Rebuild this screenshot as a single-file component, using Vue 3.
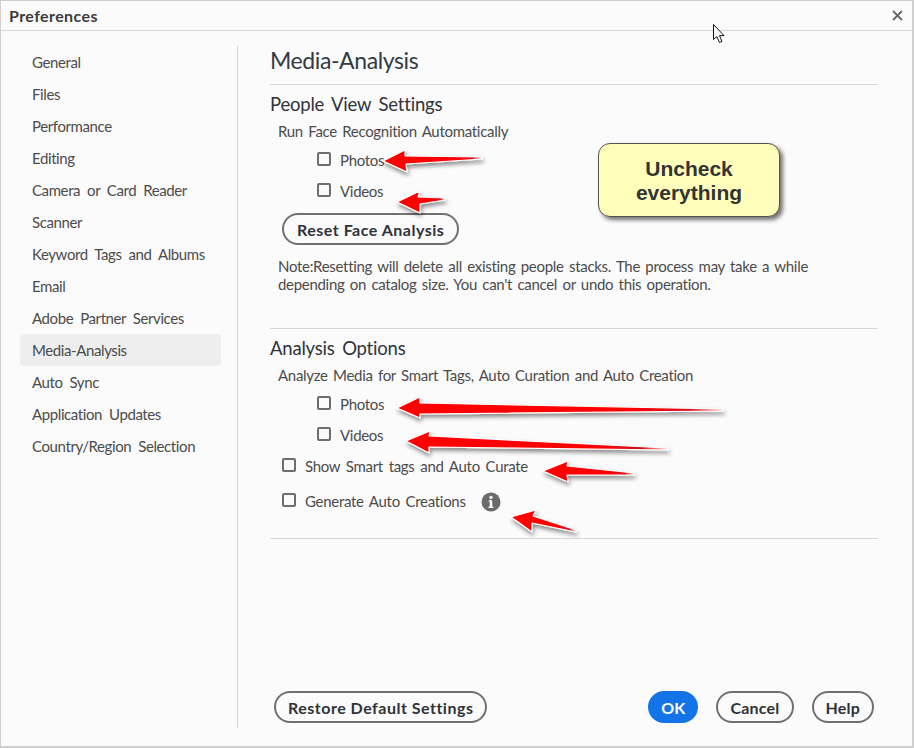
<script setup>
const navItems = ['General','Files','Performance','Editing','Camera or Card Reader','Scanner','Keyword Tags and Albums','Email','Adobe Partner Services','Media-Analysis','Auto Sync','Application Updates','Country/Region Selection']
const arrows = [
  '383,161 405,150 405,156 482,157 482,159 406,164 407,172',
  '397,202 420,191 418,197 445,198 445,200 420,204 420,213',
  '397,408 420,397 420,403 723,409 723,411 420,414 420,418',
  '406,441 430,431 429,436 668,448 668,450 429,447 429,453',
  '543,471 568,461 567,466 634,473 634,475 567,475 568,482',
  '511,517 536,510 533,516 576,530 576,532 532,523 532,532'
]
</script>

<template>
  <div class="window">
    <header class="titlebar">
      <span class="title">Preferences</span>
      <svg class="close" width="11" height="11" viewBox="0 0 11 11"><path d="M1 1l9 9M10 1l-9 9" stroke="#666" stroke-width="1.8" fill="none"/></svg>
    </header>
    <div class="body">
      <nav class="sidebar">
        <div v-for="item in navItems" :key="item" class="nav-item" :class="{ active: item === 'Media-Analysis' }">{{ item }}</div>
      </nav>
      <main class="content">
        <h1>Media-Analysis</h1>
        <section class="people">
          <h2>People View Settings</h2>
          <p class="lead">Run Face Recognition Automatically</p>
          <label class="check deep first"><i></i>Photos</label>
          <label class="check deep"><i></i>Videos</label>
          <button class="btn reset">Reset Face Analysis</button>
          <p class="note">Note:Resetting will delete all existing people stacks. The process may take a while<br>depending on catalog size. You can't cancel or undo this operation.</p>
        </section>
        <section class="analysis">
          <h2>Analysis Options</h2>
          <p class="lead">Analyze Media for Smart Tags, Auto Curation and Auto Creation</p>
          <label class="check deep first"><i></i>Photos</label>
          <label class="check deep"><i></i>Videos</label>
          <label class="check shallow"><i></i>Show Smart tags and Auto Curate</label>
          <label class="check shallow gen"><i></i>Generate Auto Creations
            <svg class="info" width="20" height="20" viewBox="0 0 20 20"><circle cx="10" cy="10" r="9.5" fill="#6b6b6b"/><circle cx="10" cy="5.4" r="1.7" fill="#fff"/><path d="M7.8 8.3h3.4v6.2h1.2v1.4H7.6v-1.4h1.2V9.7h-1z" fill="#fff"/></svg>
          </label>
        </section>
        <footer class="footer">
          <button class="btn">Restore Default Settings</button>
          <div class="actions">
            <button class="btn primary">OK</button>
            <button class="btn">Cancel</button>
            <button class="btn">Help</button>
          </div>
        </footer>
      </main>
    </div>

    <div class="callout">Uncheck<br>everything</div>

    <svg class="overlay" width="914" height="748" viewBox="0 0 914 748">
      <defs>
        <filter id="sh" x="-20%" y="-60%" width="140%" height="220%"><feDropShadow dx="1" dy="3" stdDeviation="2" flood-color="#000" flood-opacity=".45"/></filter>
        <linearGradient id="red" x1="0" y1="0" x2="1" y2="0"><stop offset=".7" stop-color="#f00"/><stop offset=".9" stop-color="#d8101c"/><stop offset="1" stop-color="#ffd8d8"/></linearGradient>
      </defs>
      <polygon v-for="p in arrows" :key="p" :points="p" fill="url(#red)" stroke="#fff" stroke-width="1.200" stroke-linejoin="round" filter="url(#sh)"/>
      <path d="M713.5 24.5v15l3.4-3 2.5 6 2.6-1.100-2.500-5.800h4.500z" fill="#fff" stroke="#111" stroke-width="1"/>
    </svg>
  </div>
</template>

<style>
html, body { margin: 0; background: #fbfbfc; }
</style>

<style scoped>
.window {
  position: relative;
  box-sizing: border-box;
  width: 914px;
  height: 748px;
  border: 1px solid #cfcfcf;
  border-right-width: 2px;
  border-bottom-width: 2px;
  background: #fbfbfc;
  color: #4b4b4b;
  font-family: Lato, "Noto Sans", sans-serif;
  font-size: 15px;
  overflow: hidden;
}
.titlebar {
  box-sizing: border-box;
  height: 30px;
  border-bottom: 1px solid #d6d6d6;
  display: flex;
  align-items: center;
  justify-content: space-between;
  padding: 0 9px 0 8px;
}
.title { font-weight: 700; font-size: 16px; color: #3c3c3c; letter-spacing: .4px; }
.body { display: flex; height: 715px; }
.sidebar {
  box-sizing: border-box;
  width: 237px;
  height: 682px;
  margin-top: 15px;
  padding: 0 16px 0 19px;
  border-right: 1px solid #d6d6d6;
}
.nav-item {
  height: 32px;
  line-height: 32px;
  padding-left: 12px;
  border-radius: 4px;
  white-space: nowrap;
  letter-spacing: -.4px;
  word-spacing: 3.500px;
}
.nav-item.active { background: #eeeeef; }
.content {
  box-sizing: border-box;
  width: 608px;
  margin-left: 32px;
  height: 715px;
  display: flex;
  flex-direction: column;
}
h1 {
  margin: 0;
  height: 54px;
  box-sizing: border-box;
  padding-top: 14px;
  line-height: 31px;
  font-size: 23px;
  letter-spacing: -.4px;
  font-weight: 400;
  color: #333a42;
  border-bottom: 1px solid #d6d6d6;
}
h2 {
  margin: 0;
  font-size: 18.500px;
  line-height: 24px;
  font-weight: 400;
  color: #2f343a;
  letter-spacing: -.2px;
  word-spacing: 3px;
}
.people { height: 236px; border-bottom: 1px solid #d6d6d6; padding-top: 7px; }
.analysis { height: 202px; padding-top: 7px; border-bottom: 1px solid #d6d6d6; }
.lead, .note { letter-spacing: -.3px; word-spacing: 1.800px; white-space: nowrap; }
.lead { margin: 5px 0 0 8px; line-height: 20px; }
.check {
  display: flex;
  align-items: center;
  height: 20px;
  line-height: 20px;
  margin-top: 11px;
  white-space: nowrap;
  letter-spacing: -.3px;
  word-spacing: 2.200px;
}
.check i {
  box-sizing: border-box;
  width: 14px;
  height: 14px;
  border: 2px solid #6e6e6e;
  border-radius: 2px;
  margin-right: 9px;
  margin-top: -2px;
}
.check.first { margin-top: 9px; }
.deep { margin-left: 47px; }
.shallow { margin-left: 12px; }
.gen { margin-top: 15px; }
.info { margin-left: 15px; margin-top: 2px; }
.btn {
  box-sizing: border-box;
  height: 32px;
  padding: 1px 12px 0;
  border: 2px solid #707070;
  border-radius: 16px;
  background: #fbfbfc;
  color: #2f3238;
  font-family: inherit;
  font-size: 16px;
  letter-spacing: .5px;
  font-weight: 700;
  white-space: nowrap;
}
.reset { display: block; margin: 12px 0 0 12px; padding: 0 13px; }
.note { margin: 12px 0 0 8px; line-height: 18px; }
.footer {
  margin-top: auto;
  margin-bottom: 23px;
  display: flex;
  justify-content: space-between;
  padding: 0 4px;
}
.actions { display: flex; gap: 18px; }
.actions .btn { letter-spacing: .2px; }
.actions .primary { background: #1473e6; border-color: #1473e6; color: #fff; padding: 1px 11px 0; }
.callout {
  position: absolute;
  left: 597px;
  top: 142px;
  box-sizing: border-box;
  width: 182px;
  height: 74px;
  padding-top: 2px;
  border: 1px solid #55554a;
  border-radius: 12px;
  background: #ffffbb;
  box-shadow: 3px 3px 4px rgba(0,0,0,.55);
  display: flex;
  align-items: center;
  justify-content: center;
  text-align: center;
  font-family: "Liberation Sans", sans-serif;
  font-weight: 700;
  font-size: 21px;
  line-height: 24px;
  color: #333;
}
.overlay { position: absolute; left: -1px; top: -1px; pointer-events: none; }
</style>
